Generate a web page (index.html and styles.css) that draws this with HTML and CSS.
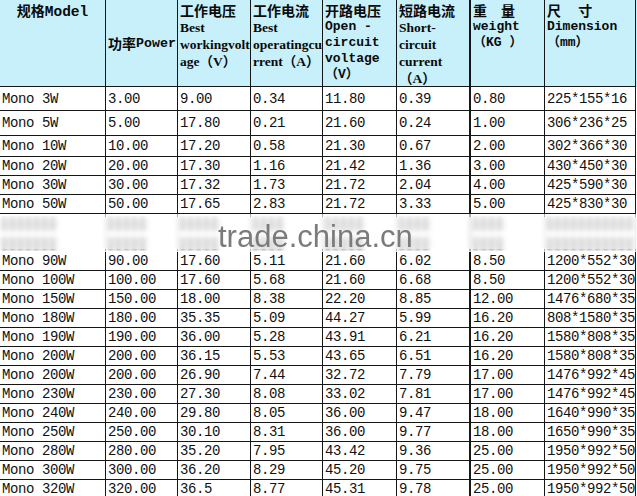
FILE: index.html
```html
<!DOCTYPE html>
<html>
<head>
<meta charset="utf-8">
<link rel="stylesheet" href="styles.css">
</head>
<body>
<div class="sheet">
  <div class="row head">
    <div class="h1"><span class="zh">规格</span><span class="mb">Model</span></div>
    <div class="h2"><span class="zh">功率</span><span class="mb pw">Power</span></div>
    <div class="hs"><div class="zh l">工作电压</div><div class="sb">Best</div><div class="sb">workingvolt</div><div class="sb">age（V）</div></div>
    <div class="hs"><div class="zh l">工作电流</div><div class="sb">Best</div><div class="sb">operatingcu</div><div class="sb">rrent（A）</div></div>
    <div class="hs"><div class="zh l">开路电压</div><div class="mb ml">Open -</div><div class="mb ml">circuit</div><div class="mb ml">voltage</div><div class="mb ml">（V）</div></div>
    <div class="hs"><div class="zh l">短路电流</div><div class="sb">Short-</div><div class="sb">circuit</div><div class="sb">current</div><div class="sb">（A）</div></div>
    <div class="hs"><div class="zh l">重　量</div><div class="mb ml">weight</div><div class="mb ml">（KG ）</div></div>
    <div class="hs"><div class="zh l">尺 　寸</div><div class="mb ml">Dimension</div><div class="mb ml">（mm）</div></div>
  </div>
  <div class="row r24"><div>Mono 3W</div><div>3.00</div><div>9.00</div><div>0.34</div><div>11.80</div><div>0.39</div><div>0.80</div><div>225*155*16</div></div>
  <div class="row r25"><div>Mono 5W</div><div>5.00</div><div>17.80</div><div>0.21</div><div>21.60</div><div>0.24</div><div>1.00</div><div>306*236*25</div></div>
  <div class="row r21"><div>Mono 10W</div><div>10.00</div><div>17.20</div><div>0.58</div><div>21.30</div><div>0.67</div><div>2.00</div><div>302*366*30</div></div>
  <div class="row"><div>Mono 20W</div><div>20.00</div><div>17.30</div><div>1.16</div><div>21.42</div><div>1.36</div><div>3.00</div><div>430*450*30</div></div>
  <div class="row"><div>Mono 30W</div><div>30.00</div><div>17.32</div><div>1.73</div><div>21.72</div><div>2.04</div><div>4.00</div><div>425*590*30</div></div>
  <div class="row"><div>Mono 50W</div><div>50.00</div><div>17.65</div><div>2.83</div><div>21.72</div><div>3.33</div><div>5.00</div><div>425*830*30</div></div>
  <div class="row blurred"><div><i class="smg w7"></i></div><div><i class="smg w5"></i></div><div><i class="smg w5"></i></div><div><i class="smg w4"></i></div><div><i class="smg w5"></i></div><div><i class="smg w4"></i></div><div><i class="smg w4"></i></div><div><i class="smg w11"></i></div></div>
  <div class="row blurred"><div><i class="smg w7"></i></div><div><i class="smg w5"></i></div><div><i class="smg w5"></i></div><div><i class="smg w4"></i></div><div><i class="smg w5"></i></div><div><i class="smg w4"></i></div><div><i class="smg w4"></i></div><div><i class="smg w11"></i></div></div>
  <div class="row"><div>Mono 90W</div><div>90.00</div><div>17.60</div><div>5.11</div><div>21.60</div><div>6.02</div><div>8.50</div><div>1200*552*30</div></div>
  <div class="row"><div>Mono 100W</div><div>100.00</div><div>17.60</div><div>5.68</div><div>21.60</div><div>6.68</div><div>8.50</div><div>1200*552*30</div></div>
  <div class="row"><div>Mono 150W</div><div>150.00</div><div>18.00</div><div>8.38</div><div>22.20</div><div>8.85</div><div>12.00</div><div>1476*680*35</div></div>
  <div class="row"><div>Mono 180W</div><div>180.00</div><div>35.35</div><div>5.09</div><div>44.27</div><div>5.99</div><div>16.20</div><div>808*1580*35</div></div>
  <div class="row"><div>Mono 190W</div><div>190.00</div><div>36.00</div><div>5.28</div><div>43.91</div><div>6.21</div><div>16.20</div><div>1580*808*35</div></div>
  <div class="row"><div>Mono 200W</div><div>200.00</div><div>36.15</div><div>5.53</div><div>43.65</div><div>6.51</div><div>16.20</div><div>1580*808*35</div></div>
  <div class="row"><div>Mono 200W</div><div>200.00</div><div>26.90</div><div>7.44</div><div>32.72</div><div>7.79</div><div>17.00</div><div>1476*992*45</div></div>
  <div class="row"><div>Mono 230W</div><div>230.00</div><div>27.30</div><div>8.08</div><div>33.02</div><div>7.81</div><div>17.00</div><div>1476*992*45</div></div>
  <div class="row"><div>Mono 240W</div><div>240.00</div><div>29.80</div><div>8.05</div><div>36.00</div><div>9.47</div><div>18.00</div><div>1640*990*35</div></div>
  <div class="row"><div>Mono 250W</div><div>250.00</div><div>30.10</div><div>8.31</div><div>36.00</div><div>9.77</div><div>18.00</div><div>1650*990*35</div></div>
  <div class="row"><div>Mono 280W</div><div>280.00</div><div>35.20</div><div>7.95</div><div>43.42</div><div>9.36</div><div>25.00</div><div>1950*992*50</div></div>
  <div class="row"><div>Mono 300W</div><div>300.00</div><div>36.20</div><div>8.29</div><div>45.20</div><div>9.75</div><div>25.00</div><div>1950*992*50</div></div>
  <div class="row"><div>Mono 320W</div><div>320.00</div><div>36.5</div><div>8.77</div><div>45.31</div><div>9.78</div><div>25.00</div><div>1950*992*50</div></div>
  <div class="wm"><span>trade.china.cn</span></div>
</div>
</body>
</html>
```
FILE: styles.css
```css
html, body {
  margin: 0;
  padding: 0;
  background: #ffffff;
}
.sheet {
  position: relative;
  width: 637px;
  height: 496px;
  overflow: hidden;
  font-family: "Liberation Mono", "Noto Sans CJK SC", monospace;
  font-size: 14px;
  color: #111111;
}
.row {
  display: grid;
  grid-template-columns: 106px 72px 73px 72px 74px 74px 74px 91px;
  height: 19px;
}
.row > div {
  box-sizing: border-box;
  border-right: 1px solid #161616;
  border-bottom: 1px solid #161616;
  padding-left: 2px;
  overflow: hidden;
  white-space: nowrap;
  display: flex;
  align-items: center;
  letter-spacing: -0.4px;
}
.row > div:nth-child(6) {
  border-right-width: 2px;
}
.r24 { height: 24px; }
.r25 { height: 25px; }
.r21 { height: 21px; }
.head {
  height: 87px;
  background: #c7f0fa;
}
.head > div {
  display: block;
  letter-spacing: 0;
  color: #0a0a0a;
}
.head > .h1 {
  text-align: center;
  padding: 2px 0 0 0;
  line-height: 17px;
}
.head > .h2 {
  display: flex;
  align-items: center;
}
.zh {
  font-family: "Noto Sans CJK SC", sans-serif;
  font-weight: 700;
  font-size: 14px;
}
.zh.l {
  line-height: 18px;
  padding-top: 1px;
  white-space: pre;
}
.mb {
  font-family: "Liberation Mono", "Noto Sans CJK SC", monospace;
  font-weight: 700;
  font-size: 14.5px;
}
.mb.pw {
  font-size: 13.3px;
}
.mb.ml {
  font-size: 13px;
  line-height: 16px;
}
.sb {
  font-family: "Liberation Serif", "Noto Sans CJK SC", serif;
  font-weight: 700;
  font-size: 13.5px;
  line-height: 17px;
}
.blurred > div {
  border-bottom-color: transparent;
  border-right-color: rgba(22, 22, 22, 0.35);
}
.smg {
  display: block;
  height: 13px;
  margin-top: 2px;
  background: repeating-linear-gradient(90deg, #9a9a9a 0 5px, rgba(154, 154, 154, 0.25) 5px 8px);
  filter: blur(1.6px);
}
.w4 { width: 32px; }
.w5 { width: 40px; }
.w7 { width: 56px; }
.w11 { width: 86px; }
.wm {
  position: absolute;
  left: 0;
  top: 217px;
  width: 637px;
  height: 32px;
  background: rgba(255, 255, 255, 0.6);
  backdrop-filter: blur(2px);
}
.wm span {
  position: absolute;
  left: 218px;
  top: 7px;
  font-family: "Liberation Sans", Arial, sans-serif;
  font-size: 31px;
  line-height: 26px;
  color: #7b7b7b;
  letter-spacing: 0;
}
```
